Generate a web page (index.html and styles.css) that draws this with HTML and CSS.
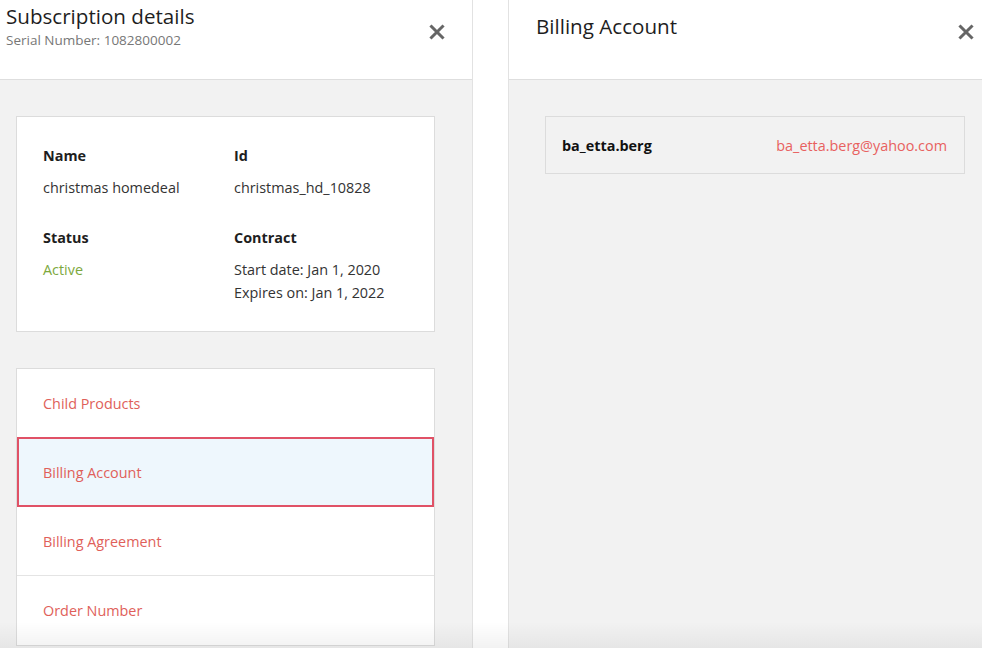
FILE: index.html
```html
<!DOCTYPE html>
<html>
<head>
<meta charset="utf-8">
<link rel="stylesheet" href="styles.css">
</head>
<body>
<div class="layout">
  <section class="panel panel-left">
    <header class="head">
      <div class="titles">
        <h1 class="title">Subscription details</h1>
        <div class="serial">Serial Number: 1082800002</div>
      </div>
      <button class="close" aria-label="Close">
        <svg width="16" height="16" viewBox="0 0 16 16"><path d="M2.5 2.5 L13.5 13.5 M13.5 2.5 L2.5 13.5" stroke="#666" stroke-width="3" stroke-linecap="square"/></svg>
      </button>
    </header>
    <div class="body">
      <div class="card info">
        <div class="grid">
          <div class="cell">
            <div class="label">Name</div>
            <div class="value">christmas homedeal</div>
          </div>
          <div class="cell">
            <div class="label">Id</div>
            <div class="value">christmas_hd_10828</div>
          </div>
          <div class="cell">
            <div class="label">Status</div>
            <div class="value active">Active</div>
          </div>
          <div class="cell">
            <div class="label">Contract</div>
            <div class="value">Start date: Jan 1, 2020</div>
            <div class="value tight">Expires on: Jan 1, 2022</div>
          </div>
        </div>
      </div>
      <div class="card menu">
        <div class="item">Child Products</div>
        <div class="item selected">Billing Account</div>
        <div class="item">Billing Agreement</div>
        <div class="item">Order Number</div>
      </div>
    </div>
  </section>
  <div class="spacer"></div>
  <section class="panel panel-right">
    <header class="head head-right">
      <h1 class="title">Billing Account</h1>
      <button class="close close-right" aria-label="Close">
        <svg width="16" height="16" viewBox="0 0 16 16"><path d="M2.5 2.5 L13.5 13.5 M13.5 2.5 L2.5 13.5" stroke="#666" stroke-width="3" stroke-linecap="square"/></svg>
      </button>
    </header>
    <div class="body">
      <div class="account">
        <span class="acc-name">ba_etta.berg</span>
        <span class="acc-email">ba_etta.berg@yahoo.com</span>
      </div>
    </div>
  </section>
</div>
<div class="fade"></div>
</body>
</html>
```
FILE: styles.css
```css
html, body {
  margin: 0;
  padding: 0;
  height: 100%;
  overflow: hidden;
  background: #ffffff;
  font-family: "Open Sans", "Noto Sans", sans-serif;
  color: #222;
}
.layout {
  display: flex;
  height: 648px;
}
.panel {
  display: flex;
  flex-direction: column;
  background: #f2f2f2;
}
.panel-left {
  width: 472px;
  border-right: 1px solid #e2e2e2;
}
.spacer {
  width: 35px;
  background: #ffffff;
}
.panel-right {
  flex: 1;
  border-left: 1px solid #e2e2e2;
}
.head {
  height: 80px;
  box-sizing: border-box;
  background: #ffffff;
  border-bottom: 1px solid #dedede;
  display: flex;
  justify-content: space-between;
  align-items: flex-start;
  padding: 3px 0 0 6px;
  flex-shrink: 0;
}
.title {
  margin: 0;
  font-size: 20.6px;
  font-weight: 400;
  line-height: 27px;
  color: #1e1e1e;
}
.serial {
  font-size: 13.5px;
  line-height: 20px;
  color: #777;
}
.close {
  border: 0;
  background: transparent;
  padding: 0;
  margin: 19px 25px 0 0;
  width: 20px;
  height: 20px;
  display: flex;
  align-items: center;
  justify-content: center;
}
.head-right {
  padding: 13px 0 0 27px;
}
.close-right {
  margin: 9px 6px 0 0;
}
.body {
  flex: 1;
  padding: 36px 0 0 16px;
}
.card {
  background: #ffffff;
  border: 1px solid #dcdcdc;
  width: 419px;
  box-sizing: border-box;
}
.info {
  height: 216px;
  padding: 29px 0 0 26px;
}
.grid {
  display: grid;
  grid-template-columns: 191px 1fr;
  row-gap: 30px;
}
.label {
  font-size: 14.4px;
  font-weight: 700;
  line-height: 20px;
  color: #1e1e1e;
  margin-bottom: 12px;
}
.value {
  font-size: 14.4px;
  line-height: 20px;
  color: #333;
}
.value.tight {
  margin-top: 3px;
}
.active {
  color: #7da83e;
}
.menu {
  margin-top: 36px;
  height: 278px;
}
.item {
  height: 69px;
  box-sizing: border-box;
  display: flex;
  align-items: center;
  padding-left: 26px;
  font-size: 14.4px;
  color: #e05f5a;
  border-bottom: 1px solid #e4e4e4;
}
.item:last-child {
  border-bottom: 0;
}
.item.selected {
  background: #eef7fd;
  border: 2px solid #e05266;
  padding-left: 24px;
  height: 70px;
  margin-top: -1px;
}
.panel-right .body {
  padding: 36px 0 0 36px;
}
.account {
  width: 420px;
  height: 58px;
  box-sizing: border-box;
  border: 1px solid #dcdcdc;
  background: #f2f2f2;
  display: flex;
  align-items: center;
  justify-content: space-between;
  padding: 0 17px 0 16px;
  font-size: 14.4px;
}
.acc-name {
  font-weight: 700;
  color: #111;
}
.acc-email {
  color: #e8615f;
}
.fade {
  position: absolute;
  left: 0;
  right: 0;
  bottom: 0;
  height: 26px;
  background: linear-gradient(to bottom, rgba(0,0,0,0), rgba(0,0,0,0.05));
  pointer-events: none;
}
```
